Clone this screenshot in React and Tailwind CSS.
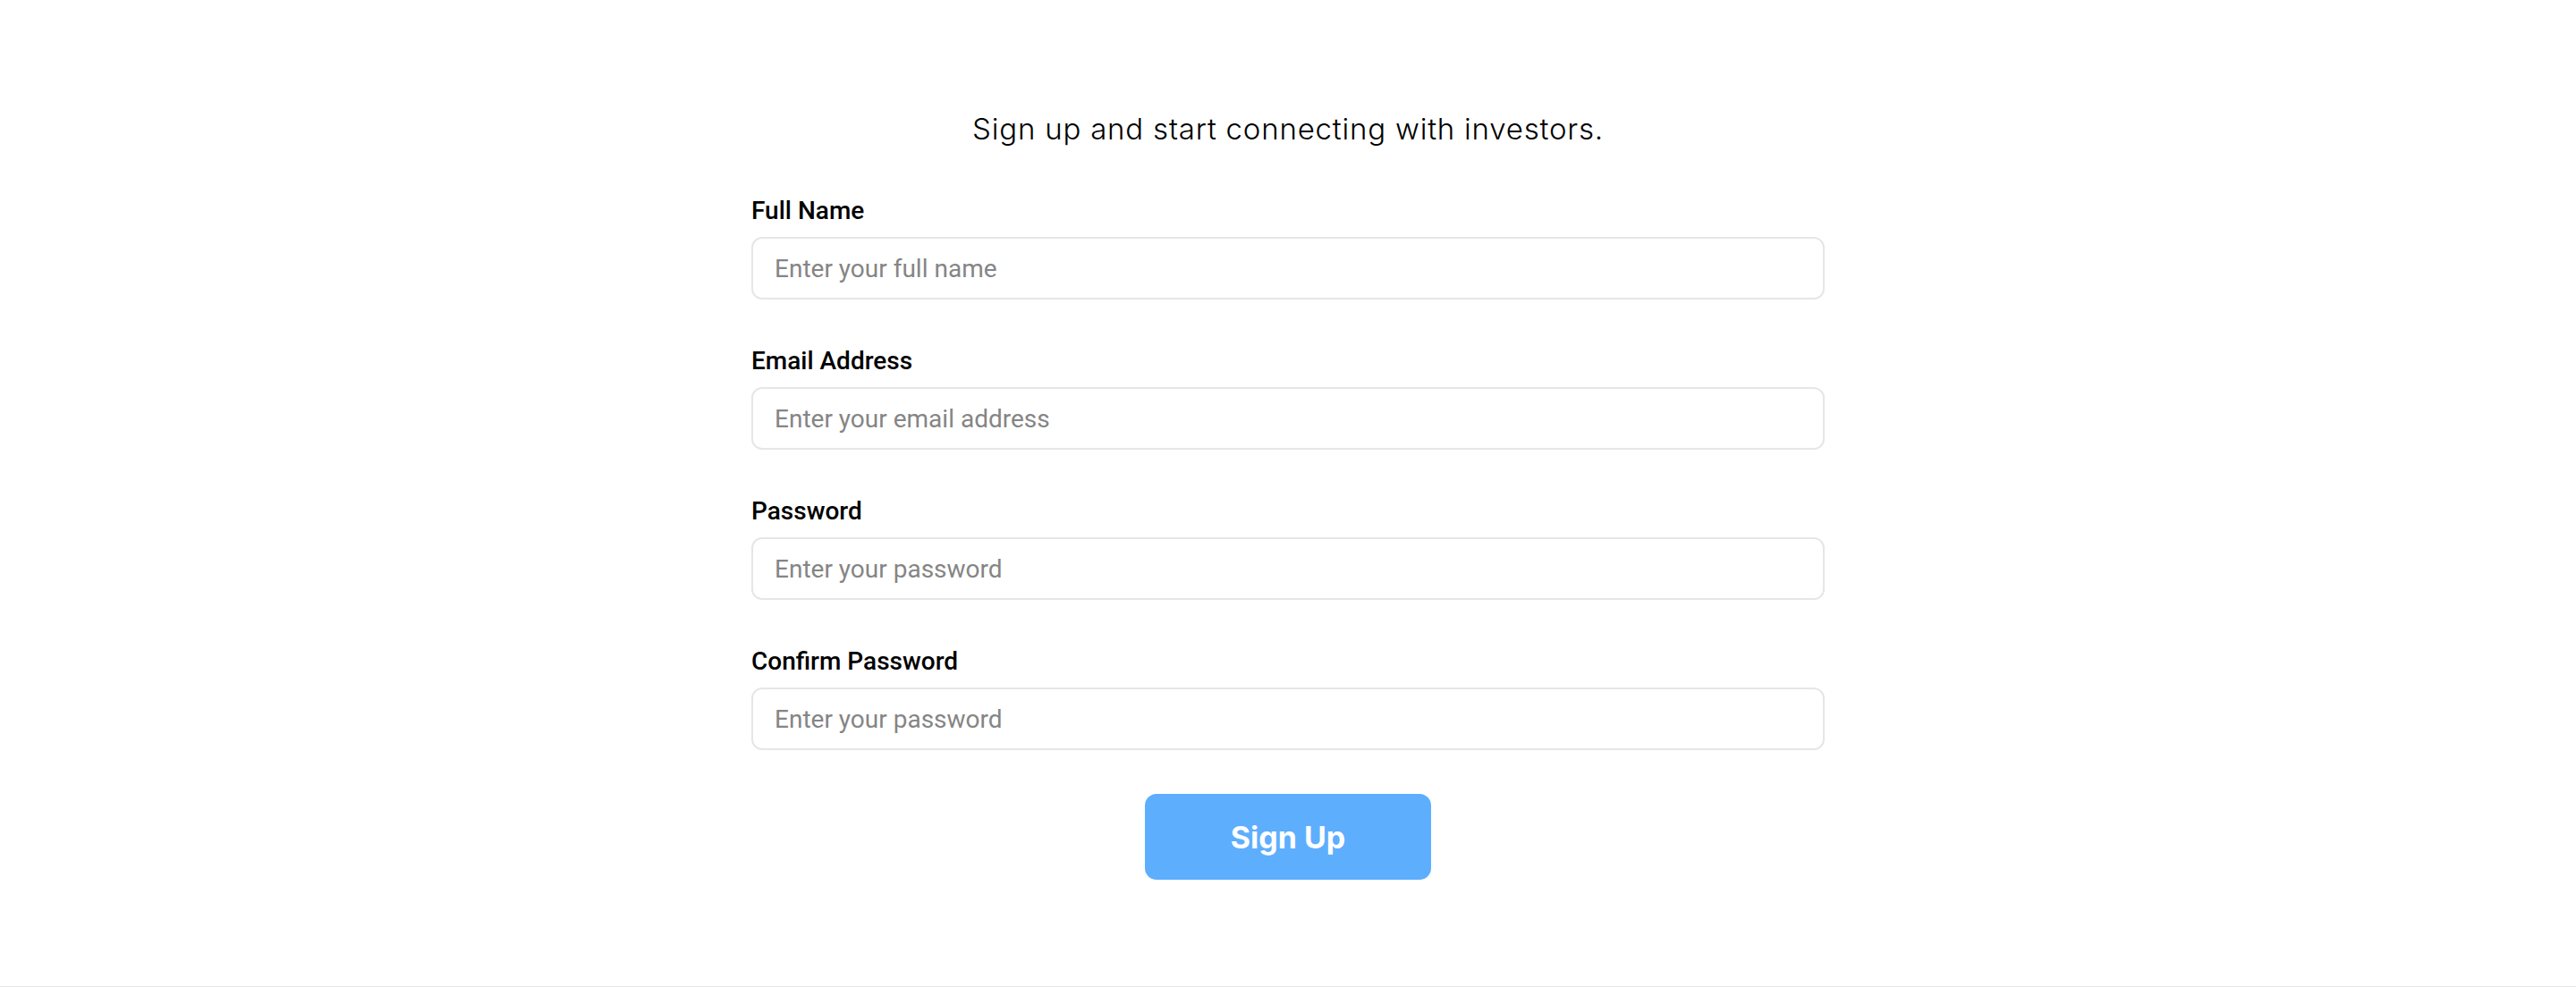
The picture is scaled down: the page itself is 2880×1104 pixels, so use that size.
import { useState } from "react";

// Sign up form - centered, single column
const fields = [
  { id: "name", label: "Full Name", type: "text", placeholder: "Enter your full name" },
  { id: "email", label: "Email Address", type: "email", placeholder: "Enter your email address" },
  { id: "password", label: "Password", type: "password", placeholder: "Enter your password" },
  { id: "confirm", label: "Confirm Password", type: "password", placeholder: "Enter your password" },
];

export default function App() {
  const [values, setValues] = useState({});

  return (
    <div className="min-h-[1104px] h-[1104px] bg-white border-b border-[#e6e6e6] font-['Roboto',sans-serif]">
      <div className="mx-auto w-[1200px] pt-[124px]">
        {/* Header */}
        <h1 className="text-center text-[33px] leading-[40px] tracking-[0.8px] font-light text-black font-['Inter',sans-serif]">
          Sign up and start connecting with investors.
        </h1>

        {/* Fields */}
        <form className="mt-[56px] flex flex-col gap-[53px]" onSubmit={(e) => e.preventDefault()}>
          {fields.map((f) => (
            <div key={f.id} className="flex flex-col gap-[13px]">
              <label htmlFor={f.id} className="text-[28px] leading-[32px] font-medium text-black">
                {f.label}
              </label>
              <input
                id={f.id}
                type={f.type}
                value={values[f.id] || ""}
                onChange={(e) => setValues({ ...values, [f.id]: e.target.value })}
                placeholder={f.placeholder}
                className="h-[70px] w-full rounded-[12px] border-2 border-[#e6e6e6] bg-white px-6 text-[28px] text-black placeholder:text-[#858585] outline-none"
              />
            </div>
          ))}
        </form>

        {/* Submit */}
        <div className="mt-[49px] flex justify-center">
          <button className="h-[96px] w-[320px] rounded-[13px] bg-[#5eaefe] text-white text-[34px] font-bold font-['Inter',sans-serif]">
            Sign Up
          </button>
        </div>
      </div>
    </div>
  );
}
